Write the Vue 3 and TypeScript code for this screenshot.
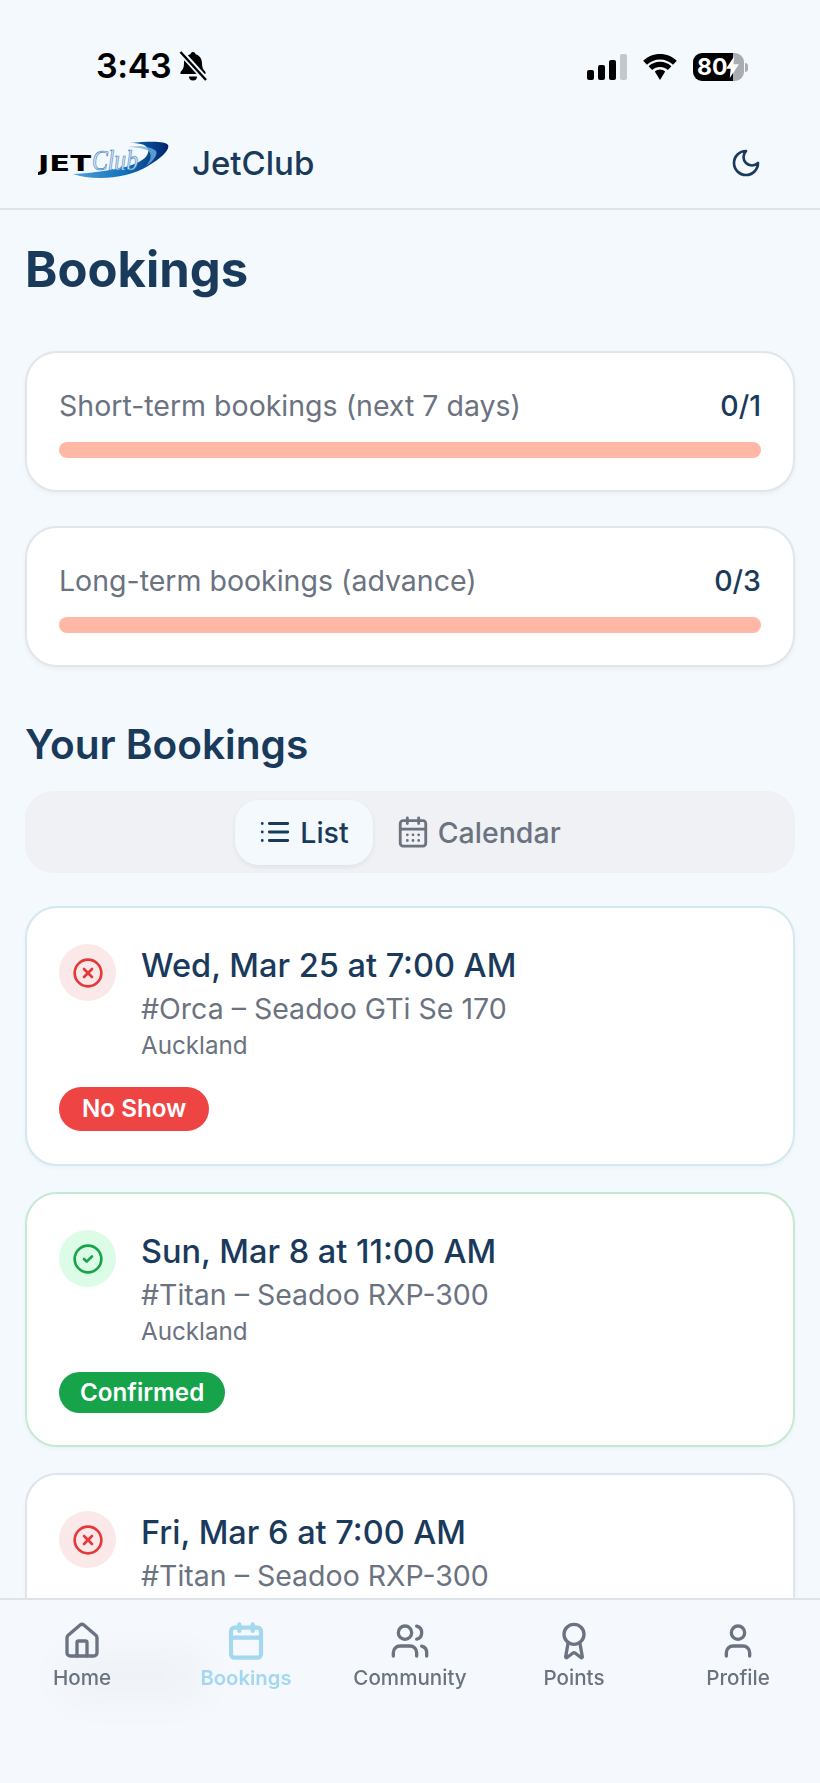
<script setup lang="ts">
type Status = "noshow" | "confirmed" | "cancelled";

interface Booking {
  when: string;
  craft: string;
  place: string;
  status: Status;
  badge: string;
}

const quotas = [
  { label: "Short-term bookings (next 7 days)", used: "0/1" },
  { label: "Long-term bookings (advance)", used: "0/3" },
];

const bookings: Booking[] = [
  { when: "Wed, Mar 25 at 7:00 AM", craft: "#Orca – Seadoo GTi Se 170", place: "Auckland", status: "noshow", badge: "No Show" },
  { when: "Sun, Mar 8 at 11:00 AM", craft: "#Titan – Seadoo RXP-300", place: "Auckland", status: "confirmed", badge: "Confirmed" },
  { when: "Fri, Mar 6 at 7:00 AM", craft: "#Titan – Seadoo RXP-300", place: "", status: "cancelled", badge: "" },
];

const tabs = ["Home", "Bookings", "Community", "Points", "Profile"];
</script>

<template>
  <div class="screen">
    <div class="status">
      <div class="status__left">
        <span class="status__time">3:43</span>
        <svg class="status__bell" viewBox="0 0 28 30" width="28" height="30">
          <path d="M14 1c1.500 0 2.500 1 2.600 2.300 4 1.200 6.400 4.500 6.400 9.200 0 4.200 1.200 6.300 3.500 8.500v2H1.500v-2C3.800 18.800 5 16.700 5 12.500c0-4.700 2.400-8 6.400-9.200C11.500 2 12.500 1 14 1z" fill="#000" />
          <path d="M10 25.500h8a4 4 0 0 1-8 0z" fill="#000" />
          <path d="M1 0 27 29" stroke="#f4f9fd" stroke-width="6" />
          <path d="M1.500 1 27 29" stroke="#000" stroke-width="2.400" />
        </svg>
      </div>
      <div class="status__right">
        <svg viewBox="0 0 40 26" width="40" height="26">
          <rect x="0" y="16" width="7" height="10" rx="2" fill="#000" />
          <rect x="11" y="11" width="7" height="15" rx="2" fill="#000" />
          <rect x="22" y="6" width="7" height="20" rx="2" fill="#000" />
          <rect x="33" y="0" width="7" height="26" rx="2" fill="#c3c8cc" />
        </svg>
        <svg class="status__wifi" viewBox="0 0 36 26" width="36" height="26">
          <path d="M18 5.500c5 0 9.500 2 13 5.200l3.800-4C30.500 2.600 24.500 0 18 0S5.500 2.600 1.200 6.700l3.800 4C8.500 7.500 13 5.500 18 5.500z" fill="#000" />
          <path d="M18 13c3 0 5.700 1.200 7.800 3.100l3.600-3.800C26.400 9.500 22.400 7.800 18 7.800s-8.400 1.700-11.400 4.500l3.600 3.800C12.300 14.200 15 13 18 13z" fill="#000" />
          <path d="M18 15.500c-2 0-3.800.8-5.200 2L18 26l5.200-8.500c-1.400-1.200-3.200-2-5.200-2z" fill="#000" />
        </svg>
        <div class="battery">
          <div class="battery__body">
            <span class="battery__level">80</span>
            <svg class="battery__bolt" viewBox="0 0 14 24" width="13" height="22">
              <path d="M9 0 0 14h5l-1 10 10-15H8z" fill="#fff" />
            </svg>
          </div>
          <span class="battery__nub"></span>
        </div>
      </div>
    </div>

    <header class="topbar">
      <div class="brand">
        <svg class="brand__logo" viewBox="0 0 131 38" width="131" height="38">
          <defs>
            <linearGradient id="swoosh" x1="0" y1="0" x2="1" y2="0">
              <stop offset="0" stop-color="#4fa3dc" />
              <stop offset="0.55" stop-color="#0f6fbb" />
              <stop offset="1" stop-color="#02256e" />
            </linearGradient>
          </defs>
          <path d="M35 33C55 40 90 38 110 25 125 16 132 8 130 4 128 0 112 0 92 2 105 2 112 5 110 12 107 22 85 30 35 33z" fill="url(#swoosh)" />
          <path d="M90 6C102 4 114 6 118 10 120 13 116 20 108 25 114 18 114 12 109 9 104 7 97 6 90 6z" fill="#6fb0e0" opacity="0.8" />
          <text class="brand__jet" x="0" y="30" textLength="53" lengthAdjust="spacingAndGlyphs">JET</text>
          <text class="brand__club" x="54" y="29" textLength="46" lengthAdjust="spacingAndGlyphs">Club</text>
        </svg>
        <span class="brand__name">JetClub</span>
      </div>
      <svg class="topbar__moon" viewBox="0 0 24 24" width="32" height="32">
        <path d="M12 3a6 6 0 0 0 9 9 9 9 0 1 1-9-9z" />
      </svg>
    </header>

    <main class="page">
      <h1 class="page__title">Bookings</h1>

      <section v-for="q in quotas" :key="q.label" class="quota">
        <div class="quota__row">
          <span class="quota__label">{{ q.label }}</span>
          <span class="quota__used">{{ q.used }}</span>
        </div>
        <div class="quota__bar"></div>
      </section>

      <h2 class="page__subtitle">Your Bookings</h2>

      <div class="switch">
        <button class="switch__btn switch__btn--on">
          <svg viewBox="0 0 24 24" width="34" height="34">
            <path d="M8 6h13M8 12h13M8 18h13" />
            <path d="M3 6h.01M3 12h.01M3 18h.01" />
          </svg>
          List
        </button>
        <button class="switch__btn">
          <svg viewBox="0 0 24 24" width="34" height="34">
            <rect x="3" y="4" width="18" height="18" rx="2" />
            <path d="M8 2v4M16 2v4M3 10h18" />
            <path d="M8 14h.01M12 14h.01M16 14h.01M8 18h.01M12 18h.01M16 18h.01" />
          </svg>
          Calendar
        </button>
      </div>

      <article
        v-for="b in bookings"
        :key="b.when"
        class="booking"
        :class="`booking--${b.status}`"
      >
        <div class="booking__top">
          <span class="booking__icon">
            <svg viewBox="0 0 24 24" width="32" height="32">
              <circle cx="12" cy="12" r="10" />
              <path v-if="b.status === 'confirmed'" d="m9 12 2 2 4-4" />
              <path v-else d="m15 9-6 6M9 9l6 6" />
            </svg>
          </span>
          <div class="booking__text">
            <div class="booking__when">{{ b.when }}</div>
            <div class="booking__craft">{{ b.craft }}</div>
            <div class="booking__place">{{ b.place }}</div>
          </div>
        </div>
        <span class="booking__badge">{{ b.badge }}</span>
      </article>
    </main>

    <nav class="tabbar">
      <div v-for="(t, i) in tabs" :key="t" class="tabbar__item" :class="{ 'tabbar__item--on': t === 'Bookings' }">
        <svg viewBox="0 0 24 24" width="40" height="40">
          <template v-if="i === 0">
            <path d="M15 21v-8a1 1 0 0 0-1-1h-4a1 1 0 0 0-1 1v8" />
            <path d="M3 10a2 2 0 0 1 .7-1.500l7-6a2 2 0 0 1 2.600 0l7 6a2 2 0 0 1 .7 1.500v9a2 2 0 0 1-2 2H5a2 2 0 0 1-2-2z" />
          </template>
          <template v-else-if="i === 1">
            <rect x="3" y="4" width="18" height="18" rx="2" />
            <path d="M8 2v4M16 2v4M3 10h18" />
          </template>
          <template v-else-if="i === 2">
            <path d="M16 21v-2a4 4 0 0 0-4-4H6a4 4 0 0 0-4 4v2" />
            <circle cx="9" cy="7" r="4" />
            <path d="M22 21v-2a4 4 0 0 0-3-3.870M16 3.130a4 4 0 0 1 0 7.750" />
          </template>
          <template v-else-if="i === 3">
            <path d="m15.480 12.890 1.510 8.530a.5.5 0 0 1-.810.470l-3.580-2.690a1 1 0 0 0-1.200 0l-3.590 2.690a.5.5 0 0 1-.810-.470l1.510-8.530" />
            <circle cx="12" cy="8" r="6" />
          </template>
          <template v-else>
            <path d="M19 21v-2a4 4 0 0 0-4-4H9a4 4 0 0 0-4 4v2" />
            <circle cx="12" cy="7" r="4" />
          </template>
        </svg>
        <span class="tabbar__label">{{ t }}</span>
      </div>
    </nav>
  </div>
</template>

<style>
html,
body {
  margin: 0;
  background: #f4f9fd;
}
</style>

<style scoped>
.screen {
  position: relative;
  width: 820px;
  height: 1783px;
  overflow: hidden;
  background: #f4f9fd;
  font-family: Inter, "Noto Sans", sans-serif;
  color: #1a3a5c;
}

.status {
  height: 130px;
  box-sizing: border-box;
  padding: 46px 72px 0 96px;
  display: flex;
  justify-content: space-between;
  align-items: flex-start;
}

.status__left {
  display: flex;
  align-items: center;
  gap: 8px;
}

.status__time {
  font-size: 34px;
  line-height: 40px;
  font-weight: 600;
  letter-spacing: -0.4px;
  color: #000;
}

.status__right {
  display: flex;
  align-items: center;
  gap: 15px;
  padding-top: 7px;
}

.battery {
  display: flex;
  align-items: center;
  gap: 1px;
}

.battery__body {
  width: 51px;
  height: 28px;
  border-radius: 9px;
  background: linear-gradient(90deg, #000 0 40px, #a9adb1 40px);
  display: flex;
  align-items: center;
  padding-left: 4px;
  box-sizing: border-box;
  color: #fff;
}

.battery__level {
  font-size: 23px;
  font-weight: 700;
  line-height: 28px;
}

.battery__bolt {
  margin-left: -1px;
}

.battery__nub {
  width: 3px;
  height: 9px;
  border-radius: 0 3px 3px 0;
  background: #a9adb1;
}

.topbar {
  height: 80px;
  box-sizing: border-box;
  border-bottom: 2px solid #dde3e8;
  padding: 0 58px 12px 38px;
  display: flex;
  align-items: center;
  justify-content: space-between;
}

.brand {
  display: flex;
  align-items: center;
  gap: 23px;
}

.brand__logo {
  display: block;
  margin-bottom: 6px;
}

.brand__jet {
  font-family: "DejaVu Sans", sans-serif;
  font-weight: 700;
  font-size: 21px;
  fill: #000;
}

.brand__club {
  font-family: "Liberation Serif", serif;
  font-style: italic;
  font-size: 30px;
  fill: #d5e5f2;
  stroke: #3d86c4;
  stroke-width: 0.7;
}

.brand__name {
  font-size: 33px;
  font-weight: 500;
  color: #1a3a5c;
}

.topbar__moon {
  fill: none;
  stroke: #1a3a5c;
  stroke-width: 2;
  stroke-linecap: round;
  stroke-linejoin: round;
}

.page {
  padding: 0 25px;
}

.page__title {
  margin: 32px 0 0;
  font-size: 49px;
  line-height: 56px;
  font-weight: 700;
}

.quota {
  margin-top: 53px;
  height: 141px;
  box-sizing: border-box;
  padding: 33px 32px 0;
  background: #fff;
  border: 2px solid #e0e6ea;
  border-radius: 32px;
  box-shadow: 0 2px 4px rgba(20, 40, 60, 0.05);
}

.quota + .quota {
  margin-top: 34px;
}

.quota__row {
  display: flex;
  justify-content: space-between;
  font-size: 28.5px;
  line-height: 40px;
}

.quota__label {
  color: #6b7280;
}

.quota__used {
  font-weight: 500;
  color: #1a3a5c;
}

.quota__bar {
  margin-top: 16px;
  height: 16px;
  border-radius: 8px;
  background: #ffb8a6;
}

.page__subtitle {
  margin: 54px 0 0;
  font-size: 40.6px;
  line-height: 48px;
  font-weight: 600;
}

.switch {
  margin-top: 22px;
  height: 82px;
  border-radius: 28px;
  background: #eff1f4;
  display: flex;
  justify-content: center;
  align-items: center;
}

.switch__btn {
  height: 65px;
  padding: 0 24px 0 23px;
  border: 0;
  border-radius: 24px;
  background: transparent;
  display: flex;
  align-items: center;
  gap: 8px;
  font: 500 28.5px Inter, "Noto Sans", sans-serif;
  color: #6b7280;
}

.switch__btn svg {
  fill: none;
  stroke: currentColor;
  stroke-width: 2;
  stroke-linecap: round;
  stroke-linejoin: round;
}

.switch__btn--on {
  background: #f4f9fd;
  color: #1a3a5c;
  box-shadow: 0 2px 5px rgba(20, 40, 60, 0.07);
}

.booking {
  margin-top: 33px;
  height: 260px;
  box-sizing: border-box;
  padding: 36px 32px 0;
  background: #fff;
  border: 2px solid #d3e8f0;
  border-radius: 32px;
  box-shadow: 0 2px 4px rgba(20, 40, 60, 0.04);
}

.booking + .booking {
  margin-top: 26px;
}

.booking--confirmed {
  height: 255px;
  border-color: #c4ead2;
}

.booking--cancelled {
  border-color: #dfe5ea;
}

.booking__top {
  display: flex;
  gap: 25px;
}

.booking__icon {
  flex: none;
  width: 57px;
  height: 57px;
  border-radius: 50%;
  display: flex;
  align-items: center;
  justify-content: center;
}

.booking__icon svg {
  fill: none;
  stroke: currentColor;
  stroke-width: 2;
  stroke-linecap: round;
  stroke-linejoin: round;
}

.booking--noshow .booking__icon,
.booking--cancelled .booking__icon {
  background: #fbe9e9;
  color: #e5383b;
}

.booking--confirmed .booking__icon {
  background: #dcfce7;
  color: #16a34a;
}

.booking__when {
  font-size: 32.5px;
  line-height: 44px;
  font-weight: 500;
  color: #1a3a5c;
}

.booking__craft {
  font-size: 28.5px;
  line-height: 42px;
  color: #6b7280;
}

.booking__place {
  height: 32px;
  font-size: 24.2px;
  line-height: 32px;
  color: #6b7280;
}

.booking__badge {
  display: block;
  width: fit-content;
  margin-top: 25px;
  padding: 0 23px;
  height: 44px;
  line-height: 44px;
  border-radius: 22px;
  font-size: 24.2px;
  font-weight: 600;
  color: #fff;
}

.booking--noshow .booking__badge {
  background: #ef4444;
}

.booking--confirmed .booking__badge {
  margin-top: 24px;
  height: 41px;
  line-height: 41px;
  padding: 0 21px;
  background: #16a34a;
}

/* this pill only ever shows through the blurred tab bar */
.booking--cancelled .booking__badge {
  width: 104px;
  background: #7a6f72;
}

.tabbar {
  position: absolute;
  left: 0;
  right: 0;
  bottom: 0;
  height: 185px;
  box-sizing: border-box;
  padding-top: 21px;
  border-top: 2px solid #dde3e8;
  background: rgba(244, 249, 253, 0.94);
  backdrop-filter: blur(20px);
  display: grid;
  grid-template-columns: repeat(5, 1fr);
  align-items: start;
}

.tabbar__item {
  display: flex;
  flex-direction: column;
  align-items: center;
  color: #6b7280;
}

.tabbar__item svg {
  fill: none;
  stroke: currentColor;
  stroke-width: 2;
  stroke-linecap: round;
  stroke-linejoin: round;
}

.tabbar__item--on {
  color: #a3d8f0;
}

.tabbar__item--on svg {
  stroke-width: 2.5;
}

.tabbar__label {
  margin-top: 2px;
  font-size: 20.6px;
  line-height: 30px;
  font-weight: 500;
}

.tabbar__item--on .tabbar__label {
  font-weight: 600;
  font-size: 20.3px;
}
</style>
